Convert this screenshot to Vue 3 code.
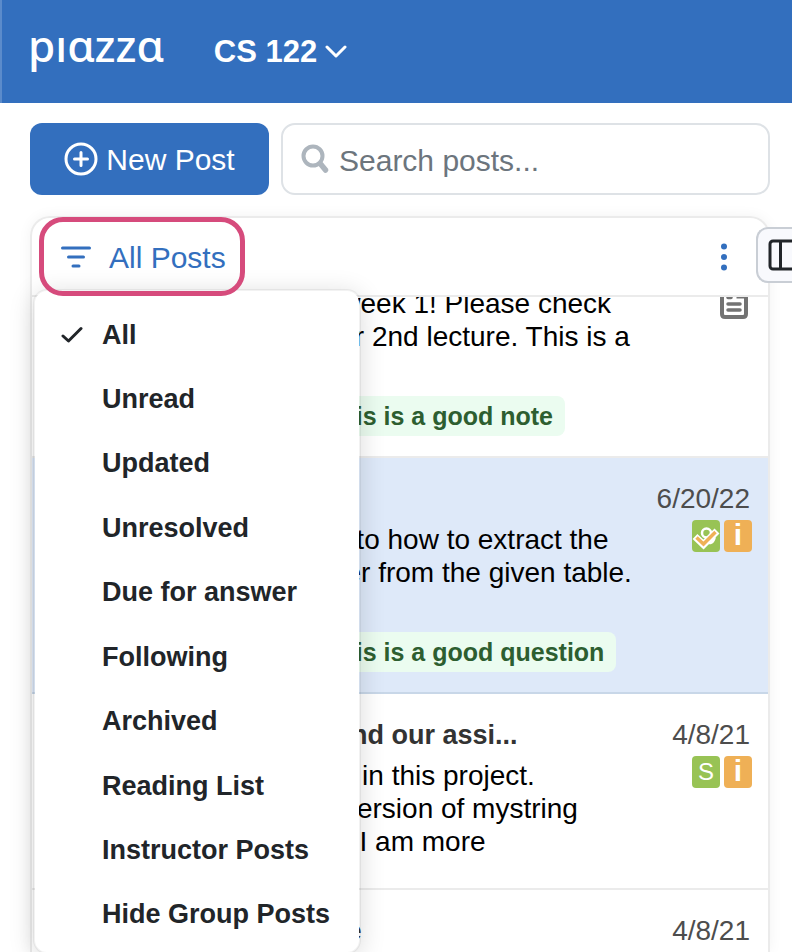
<template>
  <div class="page">
    <header class="topbar">
      <a href="#" class="logo" aria-label="piazza">pıɑzzɑ</a>
      <button class="course">
        CS 122
        <svg width="22" height="14" viewBox="0 0 22 14">
          <path d="M2 2 L11 11 L20 2" fill="none" stroke="currentColor" stroke-width="3" stroke-linecap="round" stroke-linejoin="round" />
        </svg>
      </button>
    </header>

    <div class="actions">
      <button class="new-post">
        <svg width="34" height="34" viewBox="0 0 34 34" fill="none" stroke="currentColor">
          <circle cx="17" cy="17" r="15" stroke-width="3" />
          <path d="M17 10.5 V23.5 M10.5 17 H23.5" stroke-width="3" stroke-linecap="round" />
        </svg>
        <span>New Post</span>
      </button>
      <label class="search">
        <svg width="28" height="30" viewBox="0 0 28 30" fill="none" stroke="#adb5bd">
          <circle cx="12" cy="12" r="9.5" stroke-width="4" />
          <path d="M20 20.5 L24.5 26" stroke-width="5.5" stroke-linecap="round" />
        </svg>
        <input v-model="query" type="search" placeholder="Search posts..." aria-label="Search posts" />
      </label>
    </div>

    <main class="feed">
      <div class="toolbar">
        <button class="filter" @click="menuOpen = !menuOpen">
          <svg width="30" height="22" viewBox="0 0 30 22" stroke="currentColor" stroke-width="3" stroke-linecap="round">
            <path d="M1.5 2 H28.5 M7.5 11 H22.5 M12 20 H18" />
          </svg>
          <span>All Posts</span>
        </button>
        <button class="more" aria-label="More options">
          <svg width="6" height="28" viewBox="0 0 6 28" fill="currentColor">
            <circle cx="3" cy="3.5" r="3" />
            <circle cx="3" cy="14" r="3" />
            <circle cx="3" cy="24.5" r="3" />
          </svg>
        </button>
      </div>

      <div class="posts">
        <div class="scrolled">
          <article v-for="post in posts" :key="post.id" class="post" :class="{ selected: post.selected }">
            <div class="body">
              <h3>{{ post.title }}</h3>
              <p class="excerpt">
                <span v-for="line in post.lines" :key="line">{{ line }}</span>
              </p>
              <span v-if="post.endorsed" class="endorsed">{{ post.endorsed }}</span>
            </div>
            <div class="meta">
              <time>{{ post.date }}</time>
              <div class="icons">
                <svg v-if="post.kind === 'note'" class="note" width="28" height="35" viewBox="0 0 28 35" fill="none" stroke="#737373" stroke-linecap="round">
                  <path d="M5 6 H19 L26 12 V30 Q26 33 23 33 H5 Q2 33 2 30 V9 Q2 6 5 6 Z" stroke-width="4" />
                  <path d="M18 6 V13 H25" stroke-width="3" />
                  <path d="M8 13.5 H11 M8 20 H20 M8 26 H20" stroke-width="3.5" />
                </svg>
                <svg v-if="post.kind === 'both'" width="28" height="32" viewBox="0 0 28 32" fill="none">
                  <rect width="28" height="32" rx="4" fill="#98c355" />
                  <circle cx="14.5" cy="13" r="4.5" stroke="#fff" stroke-width="2.5" />
                  <path d="M14 21 Q20 25 22 17" stroke="#fff" stroke-width="4" />
                  <path d="M3 16.5 L11.5 24.500 L25 11" stroke="#fff" stroke-width="7" />
                  <path d="M4.5 17.500 L11.500 24 L23.5 12" stroke="#efb056" stroke-width="3.500" />
                </svg>
                <span v-if="post.kind === 'student'" class="tag student">S</span>
                <span v-if="post.kind !== 'note'" class="tag instructor">i</span>
              </div>
            </div>
          </article>
        </div>
      </div>

      <div v-if="menuOpen" class="menu" role="menu">
        <button v-for="item in filters" :key="item" class="item" role="menuitem" @click="selected = item">
          <span class="tick">
            <svg v-if="selected === item" width="22" height="18" viewBox="0 0 22 18">
              <path d="M2 10 L7.5 15 L20 2.5" fill="none" stroke="currentColor" stroke-width="3" stroke-linecap="round" stroke-linejoin="round" />
            </svg>
          </span>
          {{ item }}
        </button>
      </div>
    </main>

    <button class="side-tab" aria-label="Toggle sidebar">
      <svg width="38" height="32" viewBox="0 0 38 32" fill="none" stroke="#212529" stroke-width="3">
        <rect x="2" y="2" width="34" height="28" rx="3" />
        <path d="M12.5 2 V30" />
      </svg>
    </button>
  </div>
</template>

<script setup>
import { ref } from 'vue'

const query = ref('')
const menuOpen = ref(true)
const selected = ref('All')

const filters = [
  'All',
  'Unread',
  'Updated',
  'Unresolved',
  'Due for answer',
  'Following',
  'Archived',
  'Reading List',
  'Instructor Posts',
  'Hide Group Posts'
]

const posts = [
  {
    id: 1,
    title: 'Welcome',
    date: '6/20/22',
    kind: 'note',
    lines: ['Welcome to CS 122 week 1! Please check', 'the resources page for 2nd lecture. This is a'],
    endorsed: 'An instructor votes this is a good note'
  },
  {
    id: 2,
    title: 'Table question',
    date: '6/20/22',
    kind: 'both',
    selected: true,
    lines: ['I need some clues as to how to extract the', 'the unique row number from the given table.'],
    endorsed: 'An instructor votes this is a good question'
  },
  {
    id: 3,
    title: 'The Python strings and our assi...',
    date: '4/8/21',
    kind: 'student',
    lines: ['We put python strings in this project.', 'You should copy the version of mystring', 'and test the example. I am more']
  },
  {
    id: 4,
    title: 'Assignment 1 release',
    date: '4/8/21',
    kind: 'student',
    lines: []
  }
]
</script>

<style>
body {
  font-family: "Liberation Sans", Arial, sans-serif;
  background: #fff;
}
</style>

<style scoped>
.page {
  position: relative;
  display: flex;
  flex-direction: column;
  height: 100vh;
  overflow: hidden;
}

button {
  font: inherit;
  border: none;
  background: none;
  padding: 0;
  cursor: pointer;
}

svg {
  flex: none;
}

.topbar {
  display: flex;
  align-items: center;
  gap: 50px;
  flex: none;
  height: 103px;
  box-sizing: border-box;
  padding-left: 26px;
  border-left: 2px solid #5b8bcb;
  background: #336fbe;
  color: #fff;
}

.logo {
  padding-bottom: 14px;
  font-family: "Noto Sans", sans-serif;
  font-size: 44px;
  font-weight: 500;
  line-height: 60px;
  color: #fff;
  text-decoration: none;
}

.course {
  display: flex;
  align-items: center;
  gap: 8px;
  font-size: 31px;
  font-weight: bold;
  color: #fff;
}

.actions {
  display: flex;
  flex: none;
  gap: 12px;
  padding: 20px 22px 21px 30px;
}

.new-post {
  display: flex;
  align-items: center;
  justify-content: center;
  gap: 8px;
  width: 239px;
  height: 72px;
  border-radius: 12px;
  background: #336fbe;
  color: #fff;
  font-size: 30px;
}

.new-post span,
.filter span {
  padding-top: 2px;
}

.search {
  display: flex;
  flex: 1;
  align-items: center;
  gap: 10px;
  min-width: 0;
  padding: 0 18px;
  border: 2px solid #dee2e6;
  border-radius: 14px;
}

.search input {
  flex: 1;
  min-width: 0;
  padding: 4px 0 0;
  border: none;
  outline: none;
  background: none;
  font: inherit;
  font-size: 30px;
}

.search input::placeholder {
  color: #6c757d;
  opacity: 1;
}

.feed {
  position: relative;
  display: flex;
  flex: 1;
  flex-direction: column;
  min-height: 0;
  margin: 0 22px 0 30px;
  border: 2px solid #ebebeb;
  border-bottom: none;
  border-radius: 20px 20px 0 0;
  box-shadow: 0 0 14px rgba(0, 0, 0, 0.05);
}

.toolbar {
  display: flex;
  flex: none;
  justify-content: space-between;
  height: 77px;
  padding: 0 41px 0 8px;
  border-bottom: 2px solid #ebebeb;
}

.filter {
  position: relative;
  z-index: 3;
  display: flex;
  align-items: center;
  gap: 18px;
  padding: 0 18px 0 21px;
  outline: 5px solid #d64b7c;
  outline-offset: -4px;
  border-radius: 23px;
  color: #336fbe;
  font-size: 30px;
}

.more {
  display: flex;
  align-items: center;
  color: #336fbe;
}

.posts {
  flex: 1;
  min-height: 0;
  overflow: hidden;
}

.scrolled {
  margin-top: -75px;
}

.post {
  display: flex;
  justify-content: space-between;
  padding: 25px 16px 20px 52px;
  border-bottom: 2px solid #ebebeb;
}

.post.selected {
  background: #dee9f9;
  border-bottom-color: #c8d7e8;
}

.body h3 {
  margin: 0 0 8px;
  font-size: 27px;
  line-height: 32px;
  color: #333;
  white-space: nowrap;
}

.excerpt {
  min-height: 99px;
  margin: 0 0 10px;
  font-size: 28px;
  line-height: 33px;
  color: #000;
}

.excerpt span {
  display: block;
  white-space: nowrap;
}

.endorsed {
  display: inline-block;
  padding: 0 12px;
  border-radius: 8px;
  background: #ebfcf0;
  color: #2d5e30;
  font-size: 25px;
  font-weight: bold;
  line-height: 40px;
  white-space: nowrap;
  vertical-align: top;
}

.meta {
  display: flex;
  flex-direction: column;
  align-items: flex-end;
  gap: 5px;
}

.meta time {
  padding-right: 2px;
  font-size: 28px;
  line-height: 32px;
  color: #4d4d4d;
}

.icons {
  display: flex;
  gap: 4px;
}

.note {
  margin-right: 4px;
}

.tag {
  width: 28px;
  height: 32px;
  border-radius: 4px;
  color: #fff;
  font-size: 24px;
  line-height: 32px;
  text-align: center;
}

.student {
  background: #98c355;
}

.instructor {
  background: #efb056;
  font-size: 30px;
  font-weight: bold;
  line-height: 30px;
}

.menu {
  position: absolute;
  top: 71px;
  left: 1px;
  z-index: 2;
  display: flex;
  flex-direction: column;
  justify-content: space-between;
  box-sizing: border-box;
  width: 328px;
  min-height: 665px;
  padding: 12px 0 5px;
  border: 2px solid rgba(0, 0, 0, 0.05);
  background: #fff;
  background-clip: padding-box;
  border-radius: 14px;
  box-shadow: 0 4px 26px rgba(0, 0, 0, 0.14);
}

.item {
  display: flex;
  align-items: center;
  height: 64px;
  padding-left: 26px;
  color: #212529;
  font-size: 27px;
  font-weight: bold;
}

.tick {
  display: flex;
  width: 41px;
}

.side-tab {
  position: absolute;
  top: 227px;
  right: 0;
  z-index: 1;
  display: flex;
  align-items: center;
  box-sizing: border-box;
  width: 36px;
  height: 56px;
  padding-left: 10px;
  overflow: hidden;
  border: 2px solid #c9ced5;
  border-right: none;
  border-radius: 12px 0 0 12px;
  background: #f8f9fd;
}
</style>
